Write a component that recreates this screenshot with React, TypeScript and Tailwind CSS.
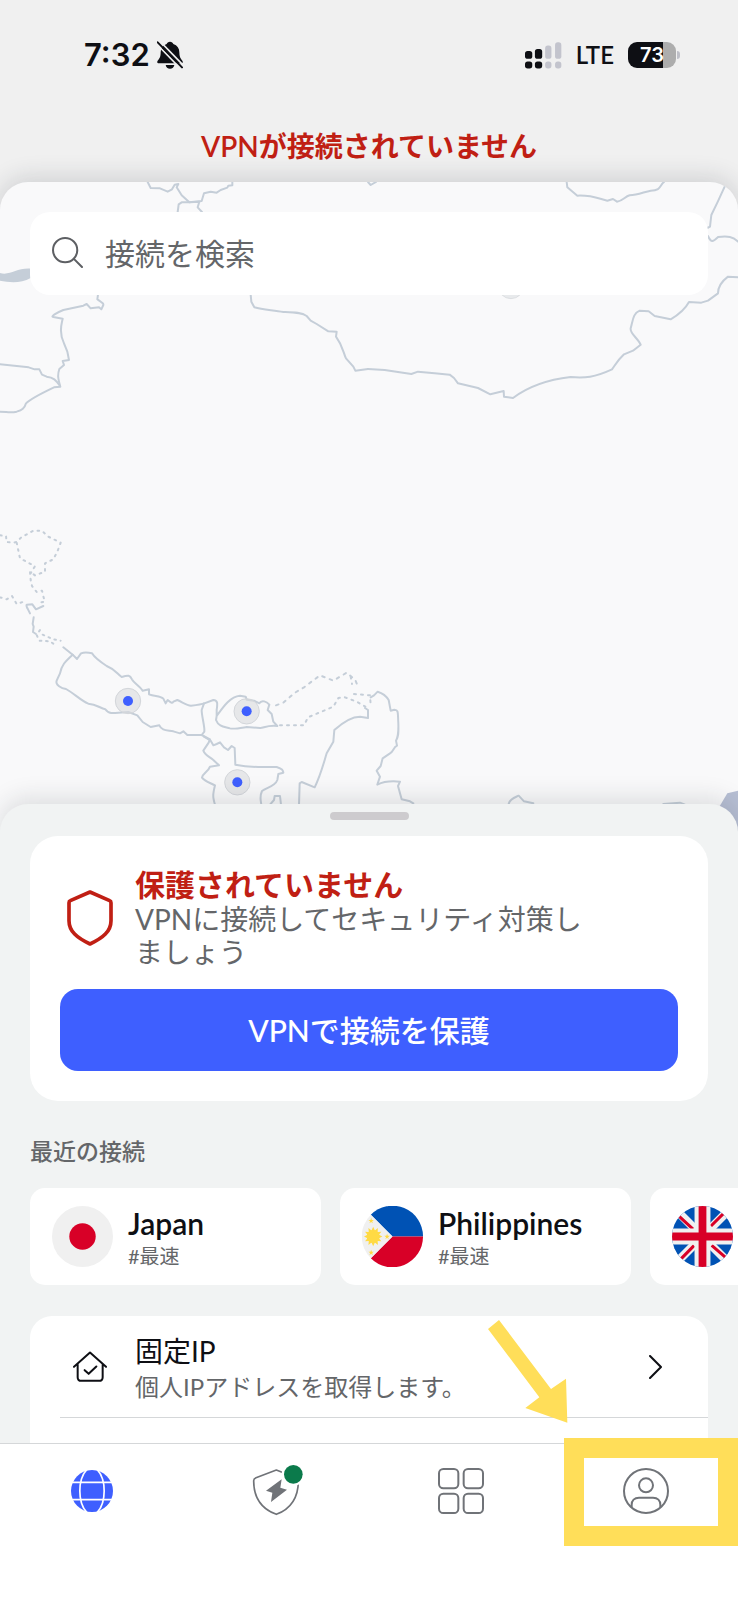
import type { ReactNode } from "react";

type Recent = {
  name: string;
  tag?: string;
  flag: ReactNode;
};

function BellOffIcon() {
  return (
    <svg viewBox="0 0 78 84" className="h-7 w-[26px]" aria-hidden="true">
      <path
        d="M39 2c5 0 9 3 10 7 12 4 18 13 18 25 0 13 3 18 9 25 3 4 1 8-4 8H6c-5 0-7-4-4-8 6-7 9-12 9-25 0-12 6-21 18-25 1-4 5-7 10-7Z"
        fill="#0e0f14"
      />
      <path d="M26 72h26c-1 7-6 11-13 11s-12-4-13-11Z" fill="#0e0f14" />
      <path d="M8 0 82 76" stroke="#f0f0f0" strokeWidth="5" />
      <path d="M-4 6 70 82" stroke="#f0f0f0" strokeWidth="5" />
      <path d="M2 4 75 79" stroke="#0e0f14" strokeWidth="6" strokeLinecap="round" />
    </svg>
  );
}

function SignalIcon() {
  return (
    <svg viewBox="0 0 112 80" className="h-[27px] w-[37px]" aria-hidden="true">
      <g fill="#0e0f14">
        <rect x="0" y="26" width="22" height="24" rx="8" />
        <rect x="30" y="20" width="22" height="30" rx="8" />
        <rect x="0" y="58" width="22" height="21" rx="8" />
        <rect x="30" y="58" width="22" height="21" rx="8" />
      </g>
      <g fill="#c3c4cd">
        <rect x="61" y="10" width="19" height="40" rx="8" />
        <rect x="91" y="0" width="19" height="50" rx="8" />
        <rect x="61" y="58" width="19" height="21" rx="8" />
        <rect x="91" y="58" width="19" height="21" rx="8" />
      </g>
    </svg>
  );
}

function StatusBar() {
  return (
    <div className="flex h-[110px] items-center justify-between pr-[58px] pl-[84px] text-[#0e0f14]">
      <div className="flex items-center gap-[7px]">
        <span className="font-[Inter] text-[31px] font-semibold">7:32</span>
        <BellOffIcon />
      </div>
      <div className="flex items-center gap-[14px]">
        <SignalIcon />
        <span className="text-2xl font-semibold">LTE</span>
        <div className="flex items-center gap-px">
          <div className="flex h-[26px] w-12 items-center justify-center rounded-[9px] bg-linear-to-r from-[#0e0f14] from-72% to-[#adadad] to-72% font-[Inter] text-xl font-semibold text-white">
            73
          </div>
          <span className="h-2 w-[3px] rounded-r-full bg-[#bfc0c8]" />
        </div>
      </div>
    </div>
  );
}

function MapBackdrop() {
  return (
    <svg
      viewBox="0 0 2214 1956"
      preserveAspectRatio="xMidYMin slice"
      className="absolute inset-0 h-full w-full"
      aria-hidden="true"
    >
      <g fill="none" stroke="#c5ced8" strokeWidth="6" strokeLinejoin="round" strokeLinecap="round">
        {/* north-west */}
        <g transform="translate(0 -36)">
          <path d="M443 36 452 54 480 55 503 65 516 58 524 44 535 42 530 52 545 76 568 97 605 93 612 70 632 65 650 68 662 60 682 53 685 47 697 46 697 36" />
          <path d="M533 126 536 103 545 97 568 97 598 95 593 112 606 126" />
          <path
            d="M0 309C30 318 50 293 92 296V324C64 340 30 338 0 332Z"
            fill="#c5ced8"
            stroke="none"
          />
          <path d="M294 374 292 388C300 395 312 398 310 405L304 418 297 412 272 415 260 402 250 407 190 420C170 428 150 440 160 441L188 446 186 455C180 480 182 500 192 520L202 545 207 570 188 573 192 585 178 597C172 615 174 625 181 650L162 652C120 672 90 688 78 700C74 715 66 720 50 725C30 730 20 725 0 725" />
          <path d="M0 583 86 592 104 598 118 598 126 614 140 620C160 622 168 630 180 648" />
          <path d="M752 374 754 395 763 412C790 420 820 420 850 426C880 427 905 427 920 438L932 452 950 462 985 484 1010 485 1008 500C1030 530 1030 550 1038 565L1060 590 1066 602 1104 597" />
        </g>
        {/* north-east */}
        <g transform="translate(1104 -36)">
          <path d="M0 36 8 45 24 36" />
          <path d="M0 597 50 600 130 612 150 605 200 610 245 614 258 624 270 640 330 654 367 673 407 663 408 680 435 684C480 650 530 630 608 621C650 625 680 622 732 598C745 580 750 570 768 553L795 542 818 524C810 505 785 490 788 475C795 450 795 430 815 422L842 424 860 438 908 448C930 435 950 420 963 396L1000 398 1020 392 1050 370C1050 350 1060 335 1080 320L1110 322" />
          <path d="M596 36 598 52 628 77C670 75 690 85 718 92L735 87 747 95C765 93 770 80 785 76C810 75 830 65 848 62C880 62 875 45 888 36" />
          <path d="M1070 50C1050 95 1035 125 1030 135L1026 170 1018 174" />
          <path d="M1020 198C1030 220 1035 215 1050 201C1080 197 1095 200 1110 215" />
          <circle cx="429" cy="347" r="39" fill="#e8eaec" stroke="#d3d6da" strokeWidth="2" />
        </g>
        {/* south-west */}
        <g transform="translate(0 984)">
          <path d="M90 310 84 298C79 290 78 288 80 284L97 283 108 298 130 288" />
          <path d="M101 322 98 342 101 350 99 366 108 372" />
          <path d="M190 412 218 434 231 447 243 430C255 425 265 427 276 430C285 445 300 455 320 468C345 478 350 490 365 501C385 495 390 495 396 508C402 520 420 528 428 542L447 538 447 553C465 560 480 556 490 566L497 580 503 570C515 580 517 580 520 575L532 570C550 578 560 586 573 587C590 585 605 583 613 580L640 570C655 570 652 585 650 600L650 618C670 590 690 560 720 557L737 560 740 569 762 572 778 580C785 568 800 575 808 584L803 600 815 612 820 635 832 648C800 645 790 655 780 654L740 651C715 655 700 658 690 655C675 650 655 650 648 630L650 618" />
          <path d="M218 434C195 455 185 465 180 490L170 512C165 525 185 535 198 537C225 552 240 570 265 581C290 582 300 595 316 598C325 612 340 610 355 608L385 606 412 616 428 636 452 651 478 646C485 662 500 660 520 664L540 670 550 664 562 675 605 675 613 665C615 650 605 620 605 600L612 580" />
          <path d="M605 675 630 688 626 698 610 722C615 735 625 738 640 750L657 766 630 770C625 785 608 790 606 803C615 815 630 818 645 826C638 855 638 860 645 884" />
          <path d="M612 680 632 692 640 706 650 702 660 697 672 712 684 720 695 708 704 714 706 764C760 775 790 770 830 771C850 778 848 780 850 788L835 792 832 810C825 830 800 832 786 843C778 860 782 870 784 884" />
          <path d="M810 884 822 870 824 858 840 858 843 884" />
          <path d="M897 884 899 820 905 816 944 832C960 800 965 780 980 730L1000 695 1003 660C1025 640 1050 620 1080 620L1104 624 1104 600 1095 594" />
          <path d="M1112 562 1122 556 1133 545C1150 550 1160 560 1166 570L1172 602 1183 599C1196 600 1193 605 1195 640C1196 670 1195 680 1188 692L1191 707C1180 712 1180 725 1170 730L1148 745 1142 768 1130 782 1140 800 1132 824C1150 815 1170 812 1200 815L1194 828 1205 868 1230 874 1240 880" />
          <path
            d="M0 76 18 78 20 96 40 98 50 96 64 82 100 62 125 62 145 80 182 98 172 125 160 148 135 160 135 185 105 196 90 185 92 210 96 228 110 246 126 242 134 275 118 278M50 98 60 145 100 166M104 170 92 190M0 262 20 268 36 258 50 282 74 274"
            strokeDasharray="5 15"
          />
          <path d="M120 360 110 375 118 392 150 394 170 408M128 374 160 388 182 392" strokeDasharray="5 14" />
          <path d="M828 586 850 578 885 548 912 532 960 496 1000 512 1040 488 1066 510 1076 535" strokeDasharray="8 16" />
          <path d="M840 646 912 646 924 622 1000 590 1015 564 1035 562 1070 575 1096 590M1062 552 1110 556 1112 585M1052 500 1056 522" strokeDasharray="6 15" />
        </g>
        {/* south-east, mostly under the sheet */}
        <g transform="translate(1200 1734)">
          <path d="M326 132C330 115 345 112 356 107L372 124 400 130" />
          <path d="M790 132 840 128 855 134" />
          <path d="M958 140 982 100 1014 92V222H990Z" fill="#b6bed3" stroke="none" />
        </g>
      </g>
      <g transform="translate(0 984)">
        {[
          [384, 573],
          [740, 604],
          [712, 817],
        ].map(([x, y]) => (
          <g key={x}>
            <circle cx={x} cy={y} r="38" fill="#d8dadd" fillOpacity="0.6" stroke="#d3d6da" strokeWidth="3" />
            <circle cx={x} cy={y} r="15" fill="#3e5fff" />
          </g>
        ))}
      </g>
    </svg>
  );
}

function SearchBox() {
  return (
    <label className="relative mx-[30px] mt-[30px] flex h-[83px] items-center gap-[22px] rounded-[20px] bg-white px-[22px] pb-[2px]">
      <svg
        viewBox="0 0 92 92"
        className="size-[31px] shrink-0"
        fill="none"
        stroke="#5d5f63"
        strokeWidth="6"
        strokeLinecap="round"
        aria-hidden="true"
      >
        <circle cx="39" cy="39" r="36" />
        <path d="m65 65 24 24" />
      </svg>
      <input
        type="search"
        placeholder="接続を検索"
        className="min-w-0 flex-1 bg-transparent text-[30px] leading-10 text-[#646669] outline-none placeholder:text-[#646669]"
      />
    </label>
  );
}

function ShieldIcon() {
  return (
    <svg viewBox="0 0 138 168" className="h-14 w-[46px] shrink-0" aria-hidden="true">
      <path
        d="M69 6 128 32C131 33 132 35 132 38V92C132 124 108 144 69 162C30 144 6 124 6 92V38C6 35 7 33 10 32Z"
        fill="none"
        stroke="#c01f14"
        strokeWidth="11"
        strokeLinejoin="round"
      />
    </svg>
  );
}

function ProtectionCard() {
  return (
    <div className="rounded-[28px] bg-white px-[30px] pt-[30px] pb-[30px]">
      <div className="flex items-center gap-[22px] pr-20 pl-[7px]">
        <ShieldIcon />
        <div>
          <h2 className="text-[30px] leading-9 font-bold text-[#c01f14]">保護されていません</h2>
          <p className="pt-px text-[28px] leading-[33px] text-[#646669]">VPNに接続してセキュリティ対策しましょう</p>
        </div>
      </div>
      <button
        type="button"
        className="mt-5 h-[82px] w-full rounded-[18px] bg-[#3e5fff] text-[30px] font-medium text-white"
      >
        VPNで接続を保護
      </button>
    </div>
  );
}

function JapanFlag() {
  return (
    <svg viewBox="-90 -90 180 180" className="size-[61px] shrink-0" aria-hidden="true">
      <circle r="90" fill="#f0f0f0" />
      <circle r="39" fill="#d80027" />
    </svg>
  );
}

function PhilippinesFlag() {
  const star = "M0-8 2-2 8-2 3 2 5 8 0 4-5 8-3 2-8-2-2-2Z";
  return (
    <svg viewBox="-90 -90 180 180" className="size-[61px] shrink-0" aria-hidden="true">
      <path d="M-64-64A90 90 0 0 1 90 0H0Z" fill="#0052b4" />
      <path d="M-64 64A90 90 0 0 0 90 0H0Z" fill="#d80027" />
      <path d="M0 0-64-64A90 90 0 0 0-64 64Z" fill="#f0f0f0" />
      <g fill="#ffda44">
        <path d="m-30 0-10 5 7 9-11-1 1 12-9-7-5 11-5-11-9 7 1-12-11 1 7-9-10-5 10-5-7-9 11 1-1-12 9 7 5-11 5 11 9-7-1 12 11-1-7 9Z" />
        <circle cx="-57" r="19" />
        <path d={star} transform="translate(-63 -47)" />
        <path d={star} transform="translate(-63 47)" />
        <path d={star} transform="translate(-16 0)" />
      </g>
    </svg>
  );
}

function UkFlag() {
  return (
    <svg viewBox="-90 -90 180 180" className="size-[61px] shrink-0" aria-hidden="true">
      <clipPath id="uk">
        <circle r="90" />
      </clipPath>
      <g clipPath="url(#uk)">
        <path d="M-90-90H90V90H-90Z" fill="#0052b4" />
        <path d="M-90-90 90 90M90-90-90 90" stroke="#f0f0f0" strokeWidth="25" />
        <path d="M-80-70-28-22M25-31 75-81M-75 78-25 27M27 26 80 72" stroke="#d80027" strokeWidth="9" />
        <path d="M0-90V90M-90 0H90" stroke="#f0f0f0" strokeWidth="47" />
        <path d="M0-90V90M-90 0H90" stroke="#d80027" strokeWidth="23" />
      </g>
    </svg>
  );
}

// The last card only peeks in from the right, so it carries the flag alone
const recents: Recent[] = [
  { name: "Japan", tag: "#最速", flag: <JapanFlag /> },
  { name: "Philippines", tag: "#最速", flag: <PhilippinesFlag /> },
  { name: "United Kingdom", flag: <UkFlag /> },
];

function RecentCard({ name, tag, flag }: Recent) {
  return (
    <button
      type="button"
      aria-label={name}
      className="flex h-[97px] w-[291px] shrink-0 items-center gap-[15px] rounded-[15px] bg-white px-[22px] text-left"
    >
      {flag}
      {tag && (
        <span className="block pt-[2px] whitespace-nowrap">
          <span className="block text-[30px] leading-9 font-semibold text-[#0e0f14]">{name}</span>
          <span className="block text-xl leading-[30px] text-[#646669]">{tag}</span>
        </span>
      )}
    </button>
  );
}

function StaticIpRow() {
  return (
    <a href="#static-ip" className="flex h-[101px] items-center">
      <svg
        viewBox="0 0 102 92"
        className="ml-[43px] h-[31px] w-[34px] shrink-0"
        fill="none"
        stroke="#0e0f14"
        strokeWidth="6"
        strokeLinecap="round"
        strokeLinejoin="round"
        aria-hidden="true"
      >
        <path d="M3 47 51 4l48 43M14 40v38c0 7 4 11 11 11h53c7 0 11-4 11-11V40M35 57l12 11 23-22" />
      </svg>
      <span className="ml-7 block flex-1 pt-1">
        <span className="block text-[28px] leading-9 text-[#0e0f14]">固定IP</span>
        <span className="block text-2xl leading-9 text-[#646669]">個人IPアドレスを取得します。</span>
      </span>
      <svg
        viewBox="0 0 38 70"
        className="mr-[46px] h-6 w-[13px] shrink-0"
        fill="none"
        stroke="#0e0f14"
        strokeWidth="6"
        strokeLinecap="round"
        strokeLinejoin="round"
        aria-hidden="true"
      >
        <path d="m3 3 32 32L3 67" />
      </svg>
    </a>
  );
}

function GlobeIcon() {
  return (
    <svg viewBox="-63 -63 126 126" className="size-[42px]" aria-hidden="true">
      <circle r="63" fill="#3e5fff" />
      <g fill="none" stroke="#fff" strokeWidth="5">
        <path d="M-63-26H63M-63 26H63M-14-66C-44-36-44 36-14 66M14-66C44-36 44 36 14 66" />
      </g>
    </svg>
  );
}

function ThreatIcon() {
  return (
    <svg viewBox="-3 0 156 156" className="size-[52px]" aria-hidden="true">
      <path
        d="M73 15 12 38C7 40 5 42 5 47 5 97 30 132 73 148 115 132 139 97 139 47 139 42 137 40 132 38Z"
        fill="none"
        stroke="#707378"
        strokeWidth="5"
        strokeLinejoin="round"
      />
      <path d="M89 43 42 77 61 83 57 111 105 74 85 68Z" fill="#707378" />
      <circle cx="124" cy="28" r="35" fill="#fff" />
      <circle cx="124" cy="28" r="28" fill="#0b7a4b" />
    </svg>
  );
}

function AppsIcon() {
  return (
    <svg viewBox="0 0 138 138" className="size-[46px]" fill="none" stroke="#707378" strokeWidth="6" aria-hidden="true">
      <rect x="3" y="3" width="58" height="58" rx="13" />
      <rect x="77" y="3" width="58" height="58" rx="13" />
      <rect x="3" y="77" width="58" height="58" rx="13" />
      <rect x="77" y="77" width="58" height="58" rx="13" />
    </svg>
  );
}

function ProfileIcon() {
  return (
    <svg viewBox="0 0 138 138" className="size-[46px]" fill="none" stroke="#707378" strokeWidth="6" aria-hidden="true">
      <circle cx="69" cy="69" r="66" />
      <circle cx="69" cy="52" r="21" />
      <path d="M26 118V110C26 98 34 89 48 89H90C104 89 112 98 112 110V118" />
    </svg>
  );
}

const tabs = [
  { label: "VPN", icon: <GlobeIcon /> },
  { label: "脅威対策", icon: <ThreatIcon /> },
  { label: "製品", icon: <AppsIcon /> },
  { label: "プロフィール", icon: <ProfileIcon /> },
];

function TabBar() {
  return (
    <nav className="relative h-[157px] shrink-0 border-t border-[#d5d7d9] bg-white">
      <div className="grid grid-cols-4">
        {tabs.map((tab) => (
          <button
            key={tab.label}
            type="button"
            aria-label={tab.label}
            className="flex h-[94px] items-center justify-center"
          >
            {tab.icon}
          </button>
        ))}
      </div>

      {/* Callout around the profile tab */}
      <div className="pointer-events-none absolute -top-[6px] right-0 h-[108px] w-[174px] border-[20px] border-[#ffde59]" />
      <svg
        viewBox="0 0 240 309"
        className="pointer-events-none absolute right-[170px] bottom-full mb-[21px] h-[103px] w-20"
        aria-hidden="true"
      >
        <path d="M0 27 33 0 189 207 234 176 238 308 112 264 154 232Z" fill="#ffde59" />
      </svg>
    </nav>
  );
}

export default function App() {
  return (
    <div className="flex h-screen flex-col overflow-hidden bg-[#f0f0f0] font-['Lato','Noto_Sans_CJK_JP',sans-serif]">
      <main className="min-h-0 flex-1 overflow-hidden">
        <StatusBar />
        <h1 className="flex h-[72px] items-center justify-center text-[28px] font-semibold text-[#c01f14]">
          VPNが接続されていません
        </h1>

        <section className="relative flex h-[652px] flex-col overflow-clip rounded-t-[28px] bg-[#f9f9fa] shadow-[0_-4px_24px_rgba(30,35,50,0.16)]">
          <MapBackdrop />
          <SearchBox />
        </section>

        <section className="relative -mt-[30px] rounded-t-[28px] bg-[#f1f3f3] px-[30px] pt-2 shadow-[0_-6px_24px_rgba(30,35,50,0.13)]">
          <div className="mx-auto h-2 w-[79px] rounded-full bg-[#cdcbce]" />
          <div className="mt-4">
            <ProtectionCard />
          </div>

          <h2 className="mt-8 text-[23px] leading-9 font-medium text-[#646669]">最近の接続</h2>
          <div className="-mr-[30px] mt-[19px] flex gap-[19px] overflow-hidden">
            {recents.map((recent) => (
              <RecentCard key={recent.name} {...recent} />
            ))}
          </div>

          <div className="mt-[31px] rounded-t-[22px] bg-white pb-20">
            <StaticIpRow />
            <div className="ml-[30px] border-t border-[#d5d7d9]" />
          </div>
        </section>
      </main>
      <TabBar />
    </div>
  );
}
